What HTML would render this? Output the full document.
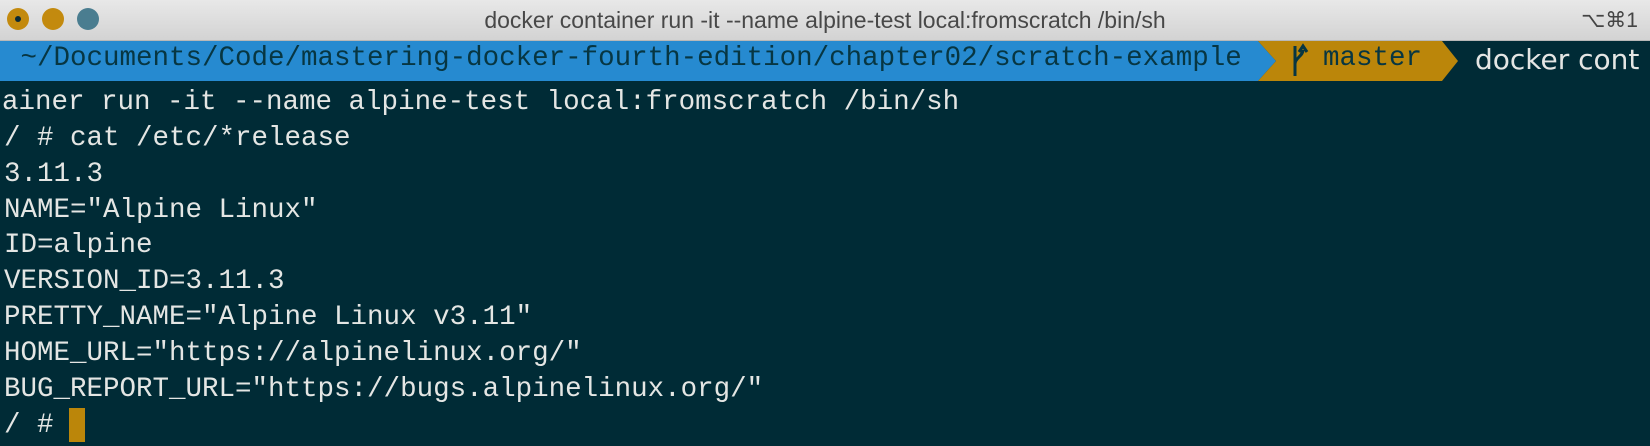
<!DOCTYPE html>
<html><head><meta charset="utf-8"><style>
html,body{margin:0;padding:0;width:1650px;height:444px;overflow:hidden;background:#002b36}
#title{position:absolute;left:0;top:0;width:1650px;height:40px;background:linear-gradient(#e8e8e8,#d3d3d3);border-bottom:1px solid #b8b8b8}
.dot{position:absolute;top:8px;width:22px;height:22px;border-radius:50%}
#tt{position:absolute;left:0;width:1650px;top:7px;text-align:center;font:23px "Liberation Sans",sans-serif;color:#484848}
#kb{position:absolute;right:12px;top:8px;font:21px "Liberation Sans","DejaVu Sans",sans-serif;color:#444}
.row{position:absolute;left:4px;height:36px;line-height:36px;font:27.5px "Liberation Mono",monospace;color:#e4e6e4;white-space:pre}
</style></head><body>
<div id="title">
<div class="dot" style="left:7px;background:#c38a0e"><div style="position:absolute;left:8px;top:8px;width:6px;height:6px;border-radius:50%;background:#0b2a36"></div></div>
<div class="dot" style="left:42px;background:#c38a0e"></div>
<div class="dot" style="left:77px;background:#4a7d90"></div>
<div id="tt">docker container run -it --name alpine-test local:fromscratch /bin/sh</div>
<div id="kb">⌥⌘1</div>
</div>
<svg style="position:absolute;left:0;top:41px" width="1650" height="40">
<polygon points="0,0 1258,0 1276,20 1258,40 0,40" fill="#268ad0"/>
<polygon points="1258,0 1442,0 1458,20 1442,40 1258,40 1276,20" fill="#bb860a"/>
<path d="M1295,5 V35 M1295,23 C1295,17 1303,15 1303,9 M1299,11 L1303,5 L1307,11" stroke="#073642" stroke-width="3" fill="none"/>
</svg>
<div class="row" style="top:43px;color:#073642"> ~/Documents/Code/mastering-docker-fourth-edition/chapter02/scratch-example</div>
<div class="row" style="top:43px;left:1323px;color:#073642">master</div>
<div class="row" style="top:43px;left:1475px;font-family:'DejaVu Sans',sans-serif;font-size:28px">docker cont</div>
<div class="row" style="top:87px;left:2px">ainer run -it --name alpine-test local:fromscratch /bin/sh</div>
<div class="row" style="top:123px">/ # cat /etc/*release</div>
<div class="row" style="top:159px">3.11.3</div>
<div class="row" style="top:195px">NAME="Alpine Linux"</div>
<div class="row" style="top:230px">ID=alpine</div>
<div class="row" style="top:266px">VERSION_ID=3.11.3</div>
<div class="row" style="top:302px">PRETTY_NAME="Alpine Linux v3.11"</div>
<div class="row" style="top:338px">HOME_URL="https://alpinelinux.org/"</div>
<div class="row" style="top:374px">BUG_REPORT_URL="https://bugs.alpinelinux.org/"</div>
<div class="row" style="top:410px">/ #</div>
<div style="position:absolute;left:69px;top:408px;width:16px;height:34px;background:#bb860a"></div>
</body></html>
